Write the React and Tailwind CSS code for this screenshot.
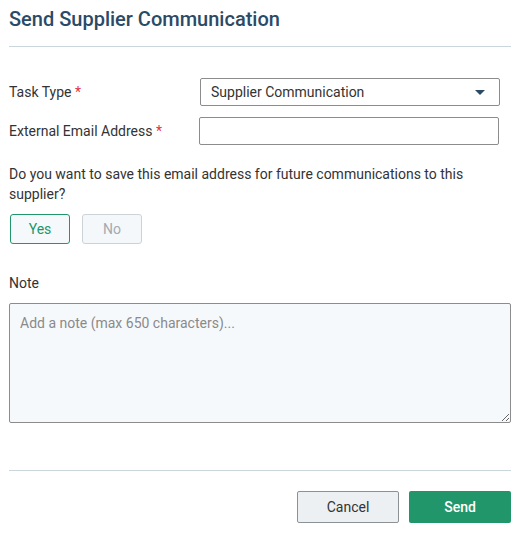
export default function App() {
  return (
    <div className="min-h-[537px] w-[521px] bg-white font-['Roboto',sans-serif] text-[#333]">
      <div className="px-[9px] pt-[7px]">
        <h1 className="text-[20px] leading-[25px] font-medium text-[#2b4a66]">
          Send Supplier Communication
        </h1>
        <div className="mt-[14px] h-px w-[502px] bg-[#c9d6db]" />

        <div className="mt-[31px] flex items-center">
          <label className="w-[191px] text-[14px] text-[#333]">
            Task Type <span className="text-[#e0343f]">*</span>
          </label>
          <div className="flex h-[28px] w-[300px] items-center justify-between rounded-[2px] border border-[#8c8c8c] pl-[10px] pr-[14px] text-[14px] text-[#333]">
            <span>Supplier Communication</span>
            <svg width="10" height="5" viewBox="0 0 10 5">
              <path d="M0 0h10L5 5z" fill="#2b4a66" />
            </svg>
          </div>
        </div>

        <div className="mt-[11px] flex items-center">
          <label className="w-[190px] text-[14px] text-[#333]">
            External Email Address <span className="text-[#e0343f]">*</span>
          </label>
          <input
            type="text"
            className="h-[28px] w-[300px] rounded-[2px] border border-[#8c8c8c] px-[10px] text-[14px] outline-none"
          />
        </div>

        <p className="mt-[19px] w-[470px] text-[14px] leading-[20px] text-[#333]">
          Do you want to save this email address for future communications to
          this supplier?
        </p>

        <div className="mt-[10px] flex gap-[12px] pl-px">
          <button className="h-[30px] w-[60px] rounded-[3px] border border-[#21966b] bg-[#f5f9fb] text-[14px] text-[#21966b]">
            Yes
          </button>
          <button className="h-[30px] w-[60px] rounded-[3px] border border-[#ccd3d8] bg-[#f5f8fa] text-[14px] text-[#a4aab0]">
            No
          </button>
        </div>

        <p className="mt-[29px] text-[14px] leading-[20px] text-[#333]">Note</p>
        <textarea
          placeholder="Add a note (max 650 characters)..."
          className="mt-[10px] block h-[120px] w-[502px] rounded-[2px] border border-[#8c8c8c] bg-[#f6f9fc] px-[10px] py-[9px] text-[14px] leading-[20px] text-[#333] outline-none placeholder:text-[#8a8a8a]"
        />

        <div className="mt-[47px] h-px w-[502px] bg-[#c9d6db]" />

        <div className="mt-[20px] flex justify-end gap-[10px] pr-[1px]">
          <button className="h-[32px] w-[102px] rounded-[2px] border border-[#8c9196] bg-[#edf0f3] text-[14px] text-[#333]">
            Cancel
          </button>
          <button className="h-[32px] w-[102px] rounded-[2px] bg-[#21966b] text-[14px] font-medium text-white">
            Send
          </button>
        </div>
      </div>
    </div>
  );
}
